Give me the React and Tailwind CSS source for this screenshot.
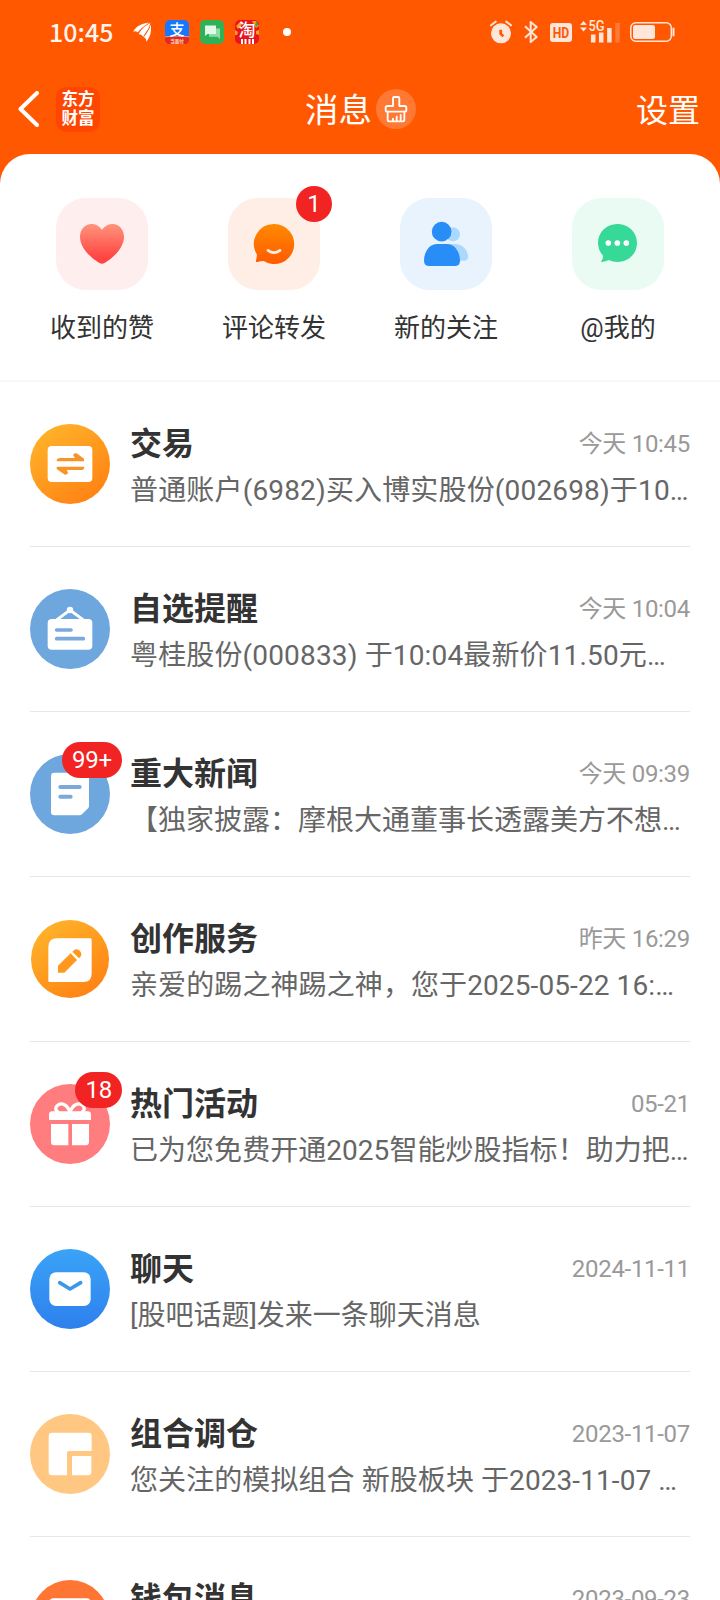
const white = { fill: "#fff" };

function GradientDisc({ id, from, to, r = 120, vertical = false }) {
  return (
    <>
      <defs>
        <linearGradient id={id} x1={vertical ? 0.5 : 0.15} y1="0" x2={vertical ? 0.5 : 0.85} y2="1">
          <stop offset="0" stopColor={from} />
          <stop offset="1" stopColor={to} />
        </linearGradient>
      </defs>
      <circle cx="120" cy="120" r={r} fill={`url(#${id})`} />
    </>
  );
}

const TradeIcon = () => (
  <>
    <GradientDisc id="trade" from="#ffb52b" to="#ff7f12" />
    <rect x="53" y="66" width="134" height="108" rx="12" {...white} />
    <path d="M80 112q0-10 11-10h44l-5-7q0-8 10-7l22 16v8z" fill="#f79428" />
    <path d="M163 128q0 10-11 10h-42l4 7q0 8-9 7l-25-17v-7z" fill="#f79428" />
  </>
);

const WatchIcon = () => (
  <>
    <circle cx="120" cy="120" r="120" fill="#6da7dd" />
    <path d="M78 94l42-31 42 31" fill="none" stroke="#fff" strokeWidth="9" />
    <circle cx="120" cy="63" r="9.5" {...white} />
    <rect x="53" y="90" width="134" height="92" rx="12" {...white} />
    <path d="M80 123h43M80 149h80" stroke="#7aa9dc" strokeWidth="11" strokeLinecap="round" />
  </>
);

const NewsIcon = () => (
  <>
    <circle cx="120" cy="120" r="120" fill="#6da7dd" />
    <path d="M73 56h94q10 0 10 10v90q0 4-3 7l-18 18q-3 3-7 3H73q-10 0-10-10V66q0-10 10-10z" {...white} />
    <path d="M91 99h58M91 128h31" stroke="#7aa9dc" strokeWidth="12" strokeLinecap="round" />
  </>
);

const CreateIcon = () => (
  <>
    <GradientDisc id="create" from="#ffb52b" to="#ff7f12" r={117} />
    <path d="M81 58h100q4 0 4 4v102q0 25-25 25H59q-4 0-4-4V84q0-26 26-26z" {...white} />
    <path d="M84 161v-21l38-37 19 20-38 38z" fill="#ff981e" />
    <path d="M127 98l7-6c10-5 24 8 19 19l-6 7z" fill="#ff981e" />
  </>
);

const GiftIcon = () => (
  <>
    <circle cx="120" cy="120" r="120" fill="#ff7c7f" />
    <path
      d="M120 84C112 62 95 55 84 63c-11 8-7 19 2 22M120 84c8-22 25-29 36-21 11 8 7 19-2 22"
      fill="none"
      stroke="#fff"
      strokeWidth="10"
    />
    <path d="M67 82h106q10 0 10 10v16H57V92q0-10 10-10z" {...white} />
    <path d="M63 120h52v64H73q-10 0-10-10zM126 120h51v54q0 10-10 10h-41z" {...white} />
  </>
);

const ChatIcon = () => (
  <>
    <GradientDisc id="chat" from="#3aa3f7" to="#2e80ed" vertical />
    <rect x="58" y="70" width="124" height="101" rx="20" {...white} />
    <path d="M89 101l31 19 32-19" fill="none" stroke="#3d97e8" strokeWidth="11" strokeLinecap="round" strokeLinejoin="round" />
  </>
);

const PortfolioIcon = () => (
  <>
    <circle cx="120" cy="120" r="120" fill="#ffc781" />
    <path d="M66 56h109q10 0 10 10v45h-68q-6 0-6 6v67H66q-10 0-10-10V66q0-10 10-10z" {...white} />
    <path d="M129 126h55v48q0 10-10 10h-48v-55q0-3 3-3z" {...white} />
  </>
);

const WalletIcon = () => (
  <>
    <circle cx="120" cy="120" r="117" fill="#ff7534" />
    <rect x="58" y="58" width="124" height="120" rx="12" {...white} />
  </>
);

const HeartIcon = () => (
  <>
    <defs>
      <linearGradient id="heart" x1="0" y1="0" x2="0" y2="1">
        <stop offset="0.05" stopColor="#ff8f78" />
        <stop offset="0.85" stopColor="#ff4542" />
      </linearGradient>
    </defs>
    <path
      d="M138 95C148 83 158 78 169 78c21 0 35 18 35 38 0 32-30 62-58 79q-8 5-16 0c-28-17-58-47-58-79 0-20 14-38 35-38 11 0 21 5 31 17z"
      fill="url(#heart)"
    />
  </>
);

const CommentIcon = () => (
  <>
    <defs>
      <linearGradient id="comment" x1="0" y1="0" x2="0" y2="1">
        <stop offset="0" stopColor="#ff8a00" />
        <stop offset="1" stopColor="#ff5a00" />
      </linearGradient>
    </defs>
    <path
      d="M138 78a60 60 0 1 1-31 111q-9 0-19 3-5 1-4-4 2-9 3-18A60 60 0 0 1 138 78z"
      fill="url(#comment)"
    />
    <path d="M120 157q18 14 36 0" fill="none" stroke="#ffeee6" strokeWidth="8" strokeLinecap="round" />
  </>
);

const FollowIcon = () => (
  <>
    <circle cx="159" cy="109" r="21" fill="#aad8ff" />
    <path d="M140 138h24c26 0 40 21 40 38q0 12-12 12h-30z" fill="#aad8ff" />
    <circle cx="125" cy="101" r="29.5" fill="#298df8" />
    <path d="M112 138h28c26 0 40 26 40 50q0 16-16 16H88q-16 0-16-16c0-24 14-50 40-50z" fill="#298df8" />
  </>
);

const MentionIcon = () => (
  <>
    <path
      d="M136 78c33 0 59 25 59 57s-26 57-59 57q-14 0-26-6-9 5-20 6-3 0-2-3 6-7 5-16-15-17-15-38c0-32 25-57 58-57z"
      fill="#36d998"
    />
    <circle cx="109" cy="135" r="8.5" {...white} />
    <circle cx="136" cy="135" r="8.5" {...white} />
    <circle cx="163" cy="135" r="8.5" {...white} />
  </>
);

const shortcuts = [
  { label: "收到的赞", tile: "bg-[#ffeeee]", Icon: HeartIcon },
  { label: "评论转发", tile: "bg-[#ffeee6]", Icon: CommentIcon, badge: "1" },
  { label: "新的关注", tile: "bg-[#e8f3fe]", Icon: FollowIcon },
  { label: "@我的", tile: "bg-[#e9fbf3]", Icon: MentionIcon },
];

const messages = [
  { title: "交易", time: "今天 10:45", text: "普通账户(6982)买入博实股份(002698)于10…", Icon: TradeIcon, tracking: "tracking-[0.16px]" },
  { title: "自选提醒", time: "今天 10:04", text: "粤桂股份(000833) 于10:04最新价11.50元…", Icon: WatchIcon, tracking: "tracking-[0.15px]" },
  { title: "重大新闻", time: "今天 09:39", text: "【独家披露：摩根大通董事长透露美方不想…", Icon: NewsIcon, badge: "99+" },
  { title: "创作服务", time: "昨天 16:29", text: "亲爱的踢之神踢之神，您于2025-05-22 16:…", Icon: CreateIcon, tracking: "tracking-[0.1px]" },
  { title: "热门活动", time: "05-21", text: "已为您免费开通2025智能炒股指标！助力把…", Icon: GiftIcon, badge: "18", tracking: "tracking-[0.04px]" },
  { title: "聊天", time: "2024-11-11", text: "[股吧话题]发来一条聊天消息", Icon: ChatIcon },
  { title: "组合调仓", time: "2023-11-07", text: "您关注的模拟组合 新股板块 于2023-11-07 …", Icon: PortfolioIcon, tracking: "tracking-[0.08px]" },
  { title: "钱包消息", time: "2023-09-23", text: "", Icon: WalletIcon },
];

function Badge({ children }) {
  return (
    <span className="absolute -top-3 -right-3 flex h-9 min-w-9 items-center justify-center rounded-full bg-[#f22323] px-[10px] text-[24px] leading-none tracking-[-0.2px] text-white">
      {children}
    </span>
  );
}

function StatusBar() {
  return (
    <div className="flex h-16 shrink-0 items-center pl-[49px] pr-[45px]">
      <span className="-mt-px w-[84px] font-['Noto_Sans_CJK_SC',sans-serif] text-[25px] leading-none font-medium text-white/95">10:45</span>
      <svg className="h-5 w-[18px]" viewBox="0 0 54 60">
        <path d="M1 29C10 10 28 4 48 2 38 9 22 19 15 31q-7-6-14-2z" {...white} />
        <path d="M17 36C26 20 38 10 52 3 50 18 38 30 31 44q-6-8-14-8z" {...white} />
        <path d="M32 46C42 32 50 22 53 8c4 20-2 38-13 52 1-7-2-12-8-14z" {...white} />
      </svg>
      <svg className="ml-[14px] h-6 w-6" viewBox="0 0 24 24">
        <rect width="24" height="24" rx="5" fill="#1677ff" />
        <path d="M0 17q12-1 24 0v2q0 5-5 5H5q-5 0-5-5z" fill="#e5281c" />
        <path d="M0 16.800q12-1.500 24 0" fill="none" stroke="#ffb27a" strokeWidth="0.800" />
        <text x="12" y="14.800" textAnchor="middle" fontSize="15" fontWeight="500" fill="#fff">支</text>
        <text x="12" y="22.500" textAnchor="middle" fontSize="4.500" fontWeight="700" fill="#ffe3c4">当面付</text>
      </svg>
      <svg className="ml-[11px] h-6 w-6" viewBox="0 0 24 24">
        <rect width="24" height="24" rx="5" fill="#2fb257" />
        <path d="M9 8.500h11v10.500l-2.500-2.200H9z" fill="#8fdba6" />
        <path d="M5 5.500h11v8.500H7.500L5 16z" fill="#e2f8e8" />
      </svg>
      <svg className="ml-[11px] h-6 w-6" viewBox="0 0 24 24">
        <rect width="24" height="24" rx="5" fill="#e8141f" />
        <path d="M1 6l5-5 2 2-5 6zM17 1h4l3 5-3 2zM0 10l3 2-1 3-2 0zM21 11l3-1v5l-3-1z" fill="#f6a21a" />
        <path d="M21 2l2 2-1 3-2-2z" fill="#38a34a" />
        <text x="12" y="15.500" textAnchor="middle" fontSize="17" fontWeight="500" fill="#fff">淘</text>
        <path d="M7 19v5M10.500 19v5M14.500 19v5M18 19v5" stroke="#fff" strokeWidth="2" />
      </svg>
      <span className="ml-6 h-2 w-2 rounded-full bg-white" />
      <div className="ml-auto flex items-center text-[#ffe6da]">
        <svg className="h-6 w-[22px]" viewBox="0 0 66 72">
          <circle cx="33" cy="40" r="30" fill="currentColor" />
          <path d="M3 16L17 5M63 16L49 5" stroke="currentColor" strokeWidth="6" strokeLinecap="round" />
          <path d="M32 29v12l8 8" fill="none" stroke="#ff5800" strokeWidth="8" />
        </svg>
        <svg className="ml-3 h-6 w-[14px]" viewBox="0 0 42 72">
          <path d="M3 19l35 32-18 15V6l18 15L3 53" fill="none" stroke="currentColor" strokeWidth="6" strokeLinejoin="round" />
        </svg>
        <svg className="ml-3 h-5 w-[22px] overflow-visible" viewBox="0 0 22 20">
          <rect y="1" width="22" height="19" rx="3" fill="currentColor" />
          <text x="11" y="16" textAnchor="middle" fontSize="15" fontWeight="700" fill="#ff5800" textLength="16.500" lengthAdjust="spacingAndGlyphs">HD</text>
        </svg>
        <svg className="ml-2 h-6 w-10 overflow-visible" viewBox="0 0 40 24">
          <path d="M0 5l3.500-4L7 5zM0 7.500l3.500 4 3.500-4z" fill="currentColor" />
          <text x="8.500" y="11" fontSize="14" fontWeight="500" fill="currentColor" textLength="16" lengthAdjust="spacingAndGlyphs">5G</text>
          <path d="M13.200 14.500v8M21.200 12.500v10M29.400 8v14.500" stroke="currentColor" strokeWidth="4.500" />
          <path d="M37.500 3v19.500" stroke="#ff7b3a" strokeWidth="4.500" />
        </svg>
        <svg className="ml-[10px] h-5 w-[45px]" viewBox="0 0 45 20">
          <rect x="0.800" y="0.800" width="40.500" height="18.400" rx="5" fill="none" stroke="currentColor" strokeWidth="1.500" />
          <rect x="3" y="3" width="22" height="14" rx="2.500" fill="currentColor" />
          <path d="M43.500 6.500v7" stroke="currentColor" strokeWidth="2" strokeLinecap="round" />
        </svg>
      </div>
    </div>
  );
}

function Header() {
  return (
    <header className="flex h-[90px] shrink-0 items-center pl-[18px] pr-[20px] text-white">
      <svg className="h-9 w-[21px]" viewBox="0 0 21 36">
        <path d="M19 2L2.500 18 19 34" fill="none" stroke="currentColor" strokeWidth="4" strokeLinecap="round" strokeLinejoin="round" />
      </svg>
      <div className="ml-[17px] flex h-[45px] w-11 flex-col items-center justify-center rounded-[10px] bg-[#ff4600] text-[16.500px] leading-[19.500px] font-bold">
        <span>东方</span>
        <span>财富</span>
      </div>
      <h1 className="mt-[3px] ml-[205px] text-[33.500px] leading-none">消息</h1>
      <svg className="ml-[4px] h-10 w-10" viewBox="0 0 120 120">
        <circle cx="60" cy="60" r="60" fill="#ff7935" />
        <g fill="none" stroke="#fff" strokeWidth="5.500" strokeLinejoin="round" strokeLinecap="round">
          <path d="M51 51V28q0-4 4-4h11q4 0 4 4v23h16q5 0 5 5v7q0 5-5 5H34q-5 0-5-5v-7q0-5 5-5z" />
          <path d="M35 68v25q0 4 4 4h42q4 0 4-4V68M51 95v-6M62 95V83M74 95V78" />
        </g>
      </svg>
      <span className="mt-[3px] ml-auto text-[32px] leading-none">设置</span>
    </header>
  );
}

export default function App() {
  return (
    <div className="flex h-[1600px] w-[720px] flex-col overflow-hidden bg-[#ff5800] font-[Roboto,'Noto_Sans_CJK_SC',sans-serif]">
      <StatusBar />
      <Header />
      <main className="flex-1 overflow-hidden rounded-t-[30px] bg-white">
        <nav className="grid h-[228px] grid-cols-4 border-b-2 border-[#f7f7f7] px-4 pt-11">
          {shortcuts.map(({ label, tile, Icon, badge }) => (
            <div key={label} className="flex flex-col items-center">
              <div className={`relative size-[92px] rounded-[30px] ${tile}`}>
                <svg className="size-full" viewBox="0 0 276 276">
                  <Icon />
                </svg>
                {badge && <Badge>{badge}</Badge>}
              </div>
              <span className="mt-[18px] text-[26px] leading-10 text-[#333]">{label}</span>
            </div>
          ))}
        </nav>
        <ul className="px-[30px]">
          {messages.map(({ title, time, text, Icon, badge, tracking = "tracking-normal" }) => (
            <li key={title} className="flex h-[165px] gap-5 border-b border-[#e6e6e6] pt-[42px]">
              <div className="relative size-20 shrink-0">
                <svg className="size-full" viewBox="0 0 240 240">
                  <Icon />
                </svg>
                {badge && <Badge>{badge}</Badge>}
              </div>
              <div className="min-w-0 flex-1">
                <div className="flex h-10 items-center justify-between">
                  <h2 className="text-[32px] leading-10 font-bold text-[#333]">{title}</h2>
                  <time className="text-[24px] leading-10 tracking-[-0.3px] text-[#999]">{time}</time>
                </div>
                <p className={`mt-[7px] text-[28px] leading-10 whitespace-nowrap text-[#666] ${tracking}`}>{text}</p>
              </div>
            </li>
          ))}
        </ul>
      </main>
    </div>
  );
}
